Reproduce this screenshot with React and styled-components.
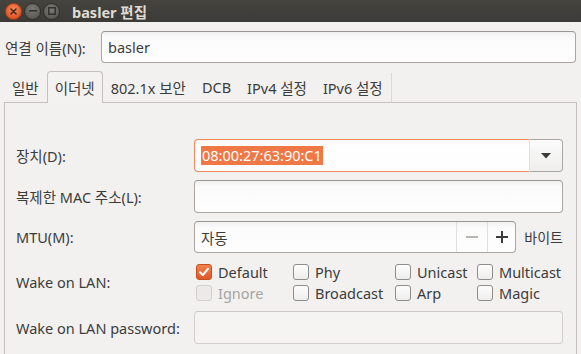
import styled, { createGlobalStyle } from 'styled-components';

const GlobalStyle = createGlobalStyle`
  html, body {
    margin: 0;
    padding: 0;
    background: #f2f1f0;
  }
  body {
    font-family: 'Noto Sans', 'Noto Sans CJK KR', sans-serif;
    font-size: 14.5px;
    color: #3c3c3c;
  }
`;

const Window = styled.div`
  width: 581px;
  height: 354px;
  overflow: hidden;
  display: flex;
  flex-direction: column;
  background: #f2f1f0;
`;

const TitleBar = styled.div`
  height: 22px;
  flex-shrink: 0;
  display: flex;
  align-items: center;
  padding-left: 5px;
  background: linear-gradient(#45443f, #3b3a36);
`;

const WinButtons = styled.div`
  display: flex;
  gap: 2px;
`;

const WinButton = styled.div`
  width: 17px;
  height: 17px;
  box-sizing: border-box;
  border-radius: 50%;
  display: flex;
  align-items: center;
  justify-content: center;
  border: 1px solid ${(p) => (p.$close ? '#a33c17' : '#2f2e2a')};
  background: ${(p) =>
    p.$close
      ? 'radial-gradient(circle at 50% 35%, #f8895b, #e0531f 75%)'
      : 'radial-gradient(circle at 50% 35%, #7b7a75, #5a5954 75%)'};
`;

const Title = styled.span`
  margin-left: 12px;
  font-weight: bold;
  color: #dfdbd2;
`;

const Body = styled.div`
  flex: 1;
  display: flex;
  flex-direction: column;
  padding: 9px 4px 0 4px;
`;

const NameRow = styled.div`
  display: grid;
  grid-template-columns: 96px 1fr;
  align-items: center;
  padding: 0 1px;
`;

const Label = styled.span`
  white-space: nowrap;
`;

const Entry = styled.div`
  height: ${(p) => p.$h || 33}px;
  box-sizing: border-box;
  display: flex;
  align-items: center;
  padding: 0 6px;
  border: 1px solid ${(p) => (p.$disabled ? '#d2cfcc' : '#aaa6a2')};
  border-top-color: ${(p) => (p.$disabled ? '#cbc8c5' : '#9a9692')};
  border-radius: 4px;
  background: ${(p) =>
    p.$disabled ? '#f5f4f3' : 'linear-gradient(#f1f1f1, #fbfbfb 6px, #fefefe)'};
`;

const Notebook = styled.div`
  flex: 1;
  display: flex;
  flex-direction: column;
  margin-top: 8px;
`;

const TabBar = styled.div`
  height: 31px;
  display: flex;
  position: relative;
  z-index: 1;
`;

const Tab = styled.div`
  display: flex;
  align-items: center;
  padding: 0 7px;
  border: 1px solid transparent;
  border-bottom: none;
  border-radius: 4px 4px 0 0;
  ${(p) =>
    p.$active &&
    `
    border-color: #c6c1bc;
    background: #f3f2f1;
    margin-bottom: -1px;
  `}
`;

const TabEnd = styled.div`
  border-left: 1px solid #dcd8d4;
  margin-top: 2px;
`;

const Frame = styled.div`
  flex: 1;
  border: 1px solid #c6c1bc;
  border-bottom: none;
  padding: 36px 13px 0 11px;
`;

const FormGrid = styled.div`
  display: grid;
  grid-template-columns: 178px 1fr;
  row-gap: 8px;
  align-items: center;
`;

const Combo = styled.div`
  height: 33px;
  display: flex;
`;

const ComboEntry = styled.div`
  flex: 1;
  display: flex;
  align-items: center;
  padding: 0 6px;
  border: 1px solid #ef8a5d;
  border-right: none;
  border-radius: 4px 0 0 4px;
  background: linear-gradient(#fbf7f5, #fefefe 6px);
`;

const Selected = styled.span`
  background: #f07746;
  color: #fff;
  padding: 0 1px;
  line-height: 19px;
`;

const ComboButton = styled.div`
  width: 34px;
  box-sizing: border-box;
  display: flex;
  align-items: center;
  justify-content: center;
  border: 1px solid #aaa6a2;
  border-left: 1px solid #e4e0dc;
  border-radius: 0 4px 4px 0;
  background: linear-gradient(#fbfbfb, #efeeed);
`;

const SpinRow = styled.div`
  display: flex;
  align-items: center;
  gap: 8px;
`;

const SpinBox = styled.div`
  flex: 1;
  height: 32px;
  box-sizing: border-box;
  display: flex;
  border: 1px solid #aaa6a2;
  border-top-color: #9a9692;
  border-radius: 4px;
  background: linear-gradient(#f1f1f1, #fbfbfb 6px, #fefefe);
`;

const SpinText = styled.div`
  flex: 1;
  display: flex;
  align-items: center;
  padding: 0 6px;
`;

const SpinButton = styled.div`
  width: ${(p) => p.$w}px;
  display: flex;
  align-items: center;
  justify-content: center;
  border-left: 1px solid #e2dfdc;
`;

const Unit = styled.span`
  font-size: 14px;
`;

const CheckGrid = styled.div`
  display: grid;
  grid-template-columns: 97px 102px 82px auto;
  grid-auto-rows: 21px;
  align-items: center;
  padding-left: 2px;
`;

const CheckItem = styled.label`
  display: flex;
  align-items: center;
  gap: 6px;
  white-space: nowrap;
  color: ${(p) => (p.$disabled ? '#a6a4a1' : '#3c3c3c')};
`;

const Box = styled.span`
  width: 16px;
  height: 16px;
  box-sizing: border-box;
  border-radius: 3px;
  display: flex;
  align-items: center;
  justify-content: center;
  flex-shrink: 0;
  border: 1px solid
    ${(p) => (p.$checked ? '#c4511f' : p.$disabled ? '#d3d0cd' : '#8f8c89')};
  background: ${(p) =>
    p.$checked
      ? 'linear-gradient(#f3834f, #dd5b27)'
      : p.$disabled
      ? '#eceae8'
      : 'linear-gradient(#fdfdfd, #ededed)'};
`;

function Check({ label, checked, disabled }) {
  return (
    <CheckItem $disabled={disabled}>
      <Box $checked={checked} $disabled={disabled}>
        {checked && (
          <svg width="12" height="12" viewBox="0 0 12 12">
            <path d="M2 6.2 L4.8 9 L10 2.8" fill="none" stroke="#fff" strokeWidth="2" strokeLinecap="round" strokeLinejoin="round" />
          </svg>
        )}
      </Box>
      {label}
    </CheckItem>
  );
}

export default function App() {
  return (
    <Window>
      <GlobalStyle />
      <TitleBar>
        <WinButtons>
          <WinButton $close>
            <svg width="7" height="7" viewBox="0 0 7 7">
              <path d="M1 1 L6 6 M6 1 L1 6" stroke="#3a2a22" strokeWidth="1.5" strokeLinecap="round" />
            </svg>
          </WinButton>
          <WinButton>
            <svg width="8" height="2" viewBox="0 0 8 2">
              <rect x="0" y="0" width="8" height="1.6" fill="#33322e" />
            </svg>
          </WinButton>
          <WinButton>
            <svg width="8" height="8" viewBox="0 0 8 8">
              <rect x="0.75" y="0.75" width="6.5" height="6.5" fill="none" stroke="#33322e" strokeWidth="1.5" />
            </svg>
          </WinButton>
        </WinButtons>
        <Title>basler 편집</Title>
      </TitleBar>
      <Body>
        <NameRow>
          <Label>연결 이름(N):</Label>
          <Entry $h={32}>basler</Entry>
        </NameRow>
        <Notebook>
          <TabBar>
            <Tab>일반</Tab>
            <Tab $active>이더넷</Tab>
            <Tab>802.1x 보안</Tab>
            <Tab>DCB</Tab>
            <Tab>IPv4 설정</Tab>
            <Tab>IPv6 설정</Tab>
            <TabEnd />
          </TabBar>
          <Frame>
            <FormGrid>
              <Label>장치(D):</Label>
              <Combo>
                <ComboEntry>
                  <Selected>08:00:27:63:90:C1</Selected>
                </ComboEntry>
                <ComboButton>
                  <svg width="10" height="6" viewBox="0 0 10 6">
                    <path d="M0 0 H10 L5 5.5 Z" fill="#3a3a3a" />
                  </svg>
                </ComboButton>
              </Combo>

              <Label>복제한 MAC 주소(L):</Label>
              <Entry />

              <Label>MTU(M):</Label>
              <SpinRow>
                <SpinBox>
                  <SpinText>자동</SpinText>
                  <SpinButton $w={30}>
                    <svg width="12" height="2" viewBox="0 0 12 2">
                      <rect width="12" height="2" fill="#b8b6b3" />
                    </svg>
                  </SpinButton>
                  <SpinButton $w={27}>
                    <svg width="12" height="12" viewBox="0 0 12 12">
                      <path d="M6 0 V12 M0 6 H12" stroke="#3c3c3c" strokeWidth="2" />
                    </svg>
                  </SpinButton>
                </SpinBox>
                <Unit>바이트</Unit>
              </SpinRow>

              <Label>Wake on LAN:</Label>
              <CheckGrid>
                <Check label="Default" checked />
                <Check label="Phy" />
                <Check label="Unicast" />
                <Check label="Multicast" />
                <Check label="Ignore" disabled />
                <Check label="Broadcast" />
                <Check label="Arp" />
                <Check label="Magic" />
              </CheckGrid>

              <Label>Wake on LAN password:</Label>
              <Entry $disabled />
            </FormGrid>
          </Frame>
        </Notebook>
      </Body>
    </Window>
  );
}
